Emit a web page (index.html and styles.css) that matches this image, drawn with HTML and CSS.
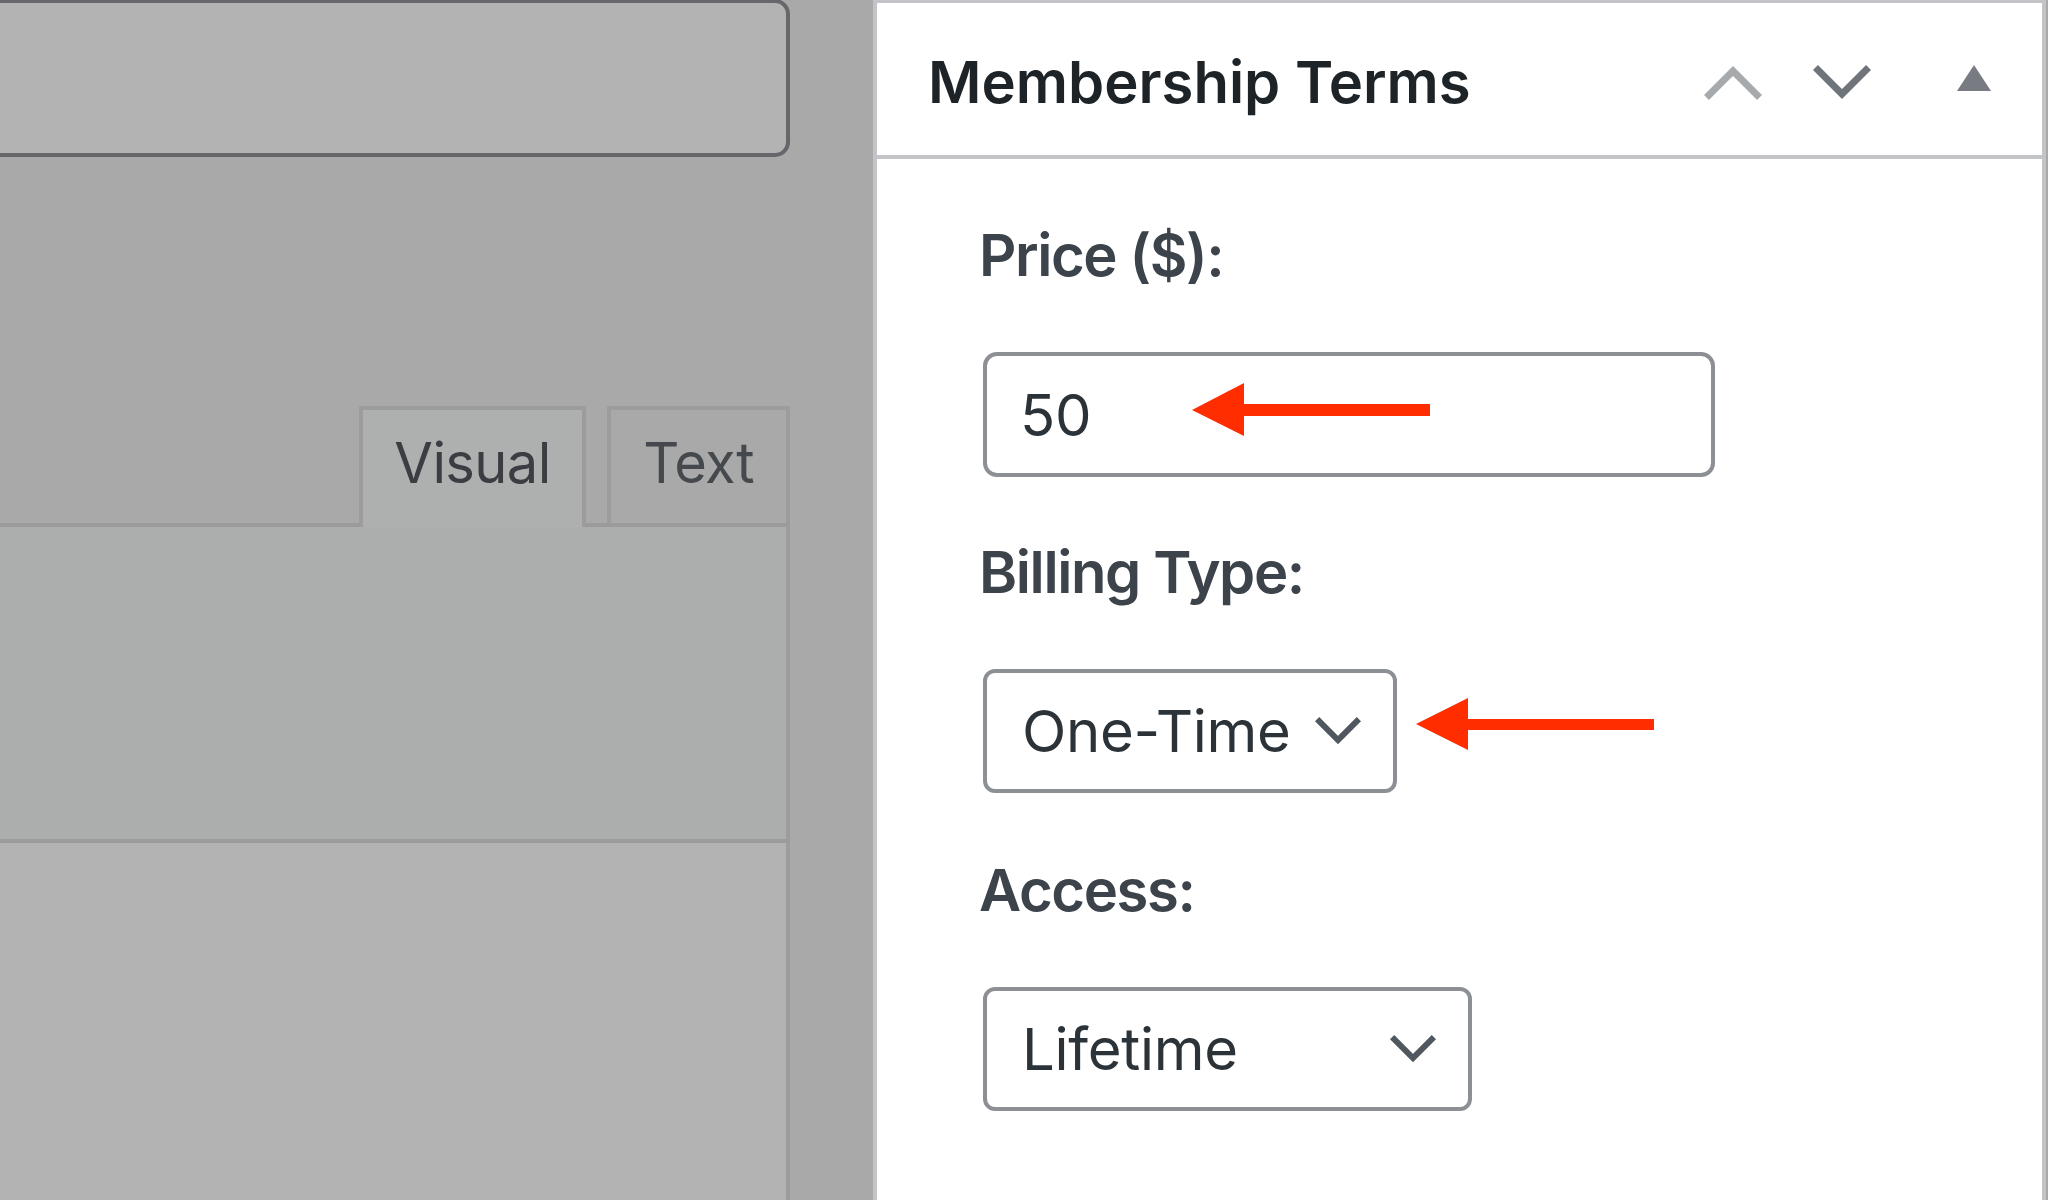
FILE: index.html
```html
<!DOCTYPE html>
<html lang="en">
<head>
<meta charset="utf-8">
<title>Membership Terms</title>
<link rel="stylesheet" href="styles.css">
</head>
<body>
<div class="page">
  <div class="editor-col">
    <div class="title-input"></div>
    <div class="tabs">
      <div class="tab tab-visual">Visual</div>
      <div class="tab tab-text">Text</div>
    </div>
    <div class="toolbar"></div>
    <div class="editor-body"></div>
  </div>

  <div class="panel">
    <div class="panel-header">
      <h2 class="panel-title">Membership Terms</h2>
      <div class="handle-actions">
        <svg class="icon-chev icon-up" viewBox="0 0 58 34"><polyline points="2.47,31.48 29,4.95 55.53,31.48" fill="none" stroke-width="7" stroke-linecap="butt" stroke-linejoin="miter"/></svg>
        <svg class="icon-chev icon-down" viewBox="0 0 58 34"><polyline points="2.47,2.47 29,29 55.53,2.47" fill="none" stroke-width="7" stroke-linecap="butt" stroke-linejoin="miter"/></svg>
        <svg class="icon-tri" viewBox="0 0 34 26"><polygon points="17,0 34,26 0,26"/></svg>
      </div>
    </div>

    <div class="panel-body">
      <div class="field-label">Price ($):</div>
      <div class="text-input">
        <span class="value">50</span>
        <svg class="annot-arrow arrow-price" viewBox="0 0 238 53"><polygon points="0,27 52,0 52,53"/><rect x="50" y="21" width="188" height="12"/></svg>
      </div>

      <div class="field-label">Billing Type:</div>
      <div class="field-row">
        <div class="select select-billing">
          <span class="value">One-Time</span>
          <svg class="select-chev" viewBox="0 0 46 28"><polyline points="2.12,2.12 23,23 43.88,2.12" fill="none" stroke-width="6" stroke-linecap="butt" stroke-linejoin="miter"/></svg>
        </div>
        <svg class="annot-arrow arrow-billing" viewBox="0 0 238 53"><polygon points="0,26 52,0 52,52"/><rect x="50" y="21" width="188" height="11"/></svg>
      </div>

      <div class="field-label">Access:</div>
      <div class="select select-access">
        <span class="value">Lifetime</span>
        <svg class="select-chev" viewBox="0 0 46 28"><polyline points="2.12,2.12 23,23 43.88,2.12" fill="none" stroke-width="6" stroke-linecap="butt" stroke-linejoin="miter"/></svg>
      </div>
    </div>
  </div>
</div>
</body>
</html>
```

FILE: styles.css
```css
html, body {
  margin: 0;
  padding: 0;
  overflow: hidden;
}

body {
  width: 2048px;
  height: 1200px;
  background: #a9a9a9;
  font-family: Inter, "Noto Sans", sans-serif;
}

.page {
  display: flex;
  height: 1200px;
}

/* ---------- left, dimmed editor ---------- */
.editor-col {
  width: 810px;
  margin-left: -20px;
  display: flex;
  flex-direction: column;
  flex-shrink: 0;
}

.title-input {
  height: 158px;
  margin-top: -1px;
  box-sizing: border-box;
  border: 4px solid #67676b;
  border-radius: 15px;
  background: #b3b3b3;
}

.tabs {
  margin-top: 249px;
  height: 121px;
  box-sizing: border-box;
  border-bottom: 4px solid #9b9b9b;
  display: flex;
  justify-content: flex-end;
  align-items: flex-start;
  gap: 21px;
}

.tab {
  box-sizing: border-box;
  border: 4px solid #9c9c9c;
  border-bottom: none;
  font-size: 56px;
  line-height: 70px;
  letter-spacing: -0.6px;
  text-align: center;
  padding-top: 18px;
}

.tab-visual {
  width: 227px;
  height: 121px;
  margin-bottom: -4px;
  background: #aeafaf;
  color: #3a3e42;
}

.tab-text {
  width: 183px;
  height: 117px;
  background: #a9a9a9;
  color: #45494e;
}

.toolbar {
  height: 316px;
  box-sizing: border-box;
  background: #acaeae;
  border-right: 4px solid #9c9c9c;
  border-bottom: 4px solid #9a9b9b;
}

.editor-body {
  flex: 1;
  background: #b3b3b3;
  border-right: 4px solid #9c9c9c;
}

/* ---------- right, meta box ---------- */
.panel {
  margin-left: 83px;
  width: 1173px;
  flex-shrink: 0;
  box-sizing: border-box;
  border: 4px solid #c3c4c7;
  border-top-width: 3px;
  border-bottom: none;
  background: #ffffff;
  display: flex;
  flex-direction: column;
}

.panel-header {
  height: 156px;
  box-sizing: border-box;
  border-bottom: 4px solid #c3c4c7;
  display: flex;
  align-items: flex-start;
  padding: 44px 51px 0 51px;
}

.panel-title {
  margin: 0;
  flex: 1;
  font-size: 58px;
  line-height: 70px;
  font-weight: 600;
  color: #1d2327;
}

.handle-actions {
  display: flex;
  align-items: flex-start;
  margin-top: 18px;
}

.icon-chev {
  width: 58px;
  height: 34px;
}

.icon-up {
  stroke: #a7aaad;
  margin-top: 1px;
}

.icon-down {
  stroke: #70757b;
  margin-left: 51px;
}

.icon-tri {
  width: 34px;
  height: 26px;
  fill: #787c82;
  margin-left: 86px;
}

.panel-body {
  padding: 61px 0 0 102px;
  display: flex;
  flex-direction: column;
  align-items: flex-start;
}

.field-label {
  font-size: 58px;
  line-height: 70px;
  font-weight: 600;
  letter-spacing: -1.4px;
  color: #3c434a;
  margin-bottom: 62px;
}

.text-input,
.select {
  margin-left: 4px;
  box-sizing: border-box;
  border: 4px solid #8c8f94;
  background: #ffffff;
  display: flex;
  align-items: center;
  font-size: 58px;
  line-height: 70px;
  letter-spacing: -0.3px;
  color: #2c3338;
}

.text-input {
  position: relative;
  width: 732px;
  height: 125px;
  border-radius: 14px;
  padding-left: 33px;
  margin-bottom: 60px;
}

.select {
  height: 124px;
  border-radius: 12px;
  justify-content: space-between;
  padding: 0 32px 0 35px;
}

.select-billing {
  width: 414px;
}

.select-access {
  width: 489px;
}

.select-chev {
  width: 46px;
  height: 28px;
  stroke: #50575e;
  flex-shrink: 0;
}

.field-row {
  display: flex;
  align-items: flex-start;
  gap: 19px;
  margin-bottom: 62px;
}

.annot-arrow {
  width: 238px;
  height: 53px;
  fill: #ff2d00;
}

.arrow-price {
  position: absolute;
  left: 205px;
  top: 27px;
}

.arrow-billing {
  margin-top: 29px;
}
```
